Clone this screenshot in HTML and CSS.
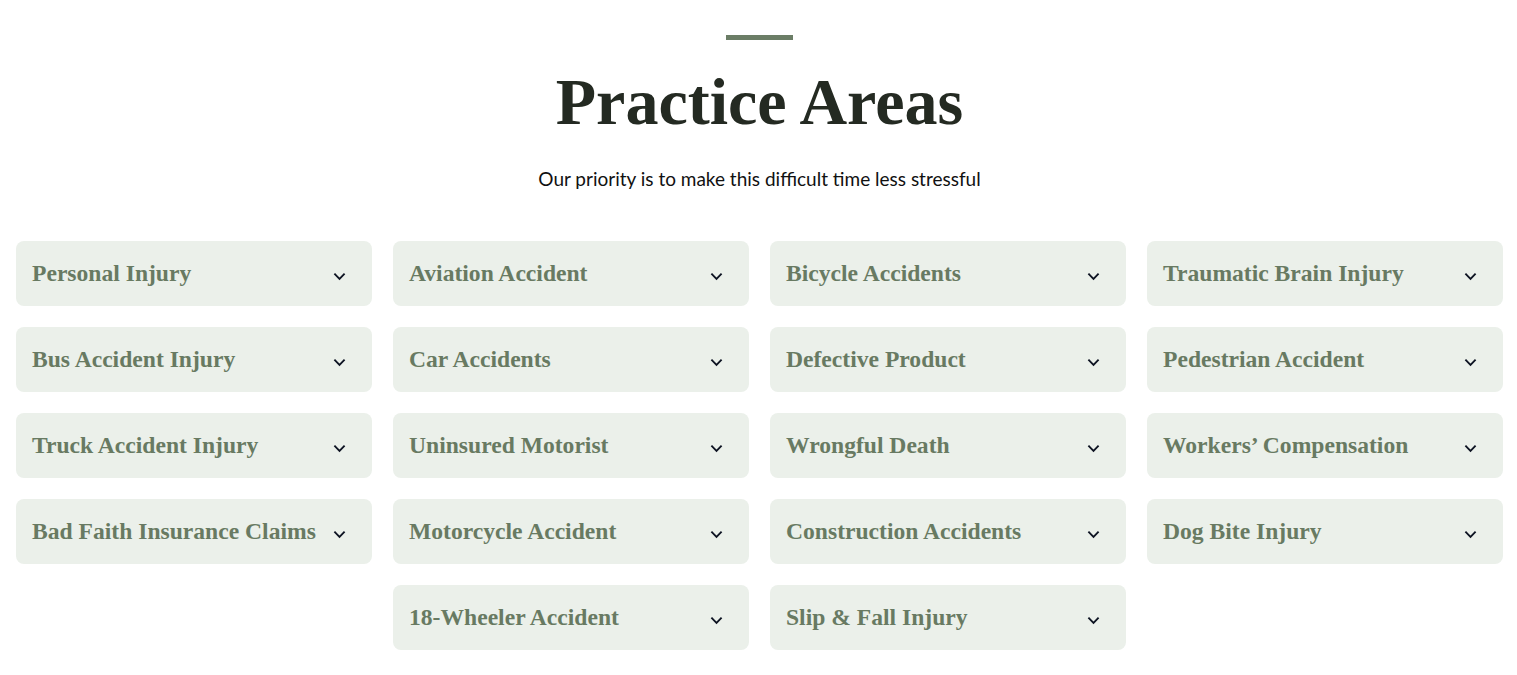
FILE: index.html
```html
<!DOCTYPE html>
<html lang="en">
<head>
    <meta charset="UTF-8">
    <meta name="viewport" content="width=device-width, initial-scale=1.0">
    <title>Practice Areas</title>
    <link rel="stylesheet" href="styles.css">
</head>
<body>
    <section class="practice">
        <div class="divider"></div>
        <h2>Practice Areas</h2>
        <p class="subtitle">Our priority is to make this difficult time less stressful</p>

        <ul class="area-list">
            <li class="area-item"><span>Personal Injury</span><svg class="chev" viewBox="0 0 14 9"><path d="M1.5 1.5 7 7l5.5-5.5"/></svg></li>
            <li class="area-item"><span>Aviation Accident</span><svg class="chev" viewBox="0 0 14 9"><path d="M1.5 1.5 7 7l5.5-5.5"/></svg></li>
            <li class="area-item"><span>Bicycle Accidents</span><svg class="chev" viewBox="0 0 14 9"><path d="M1.5 1.5 7 7l5.5-5.5"/></svg></li>
            <li class="area-item"><span>Traumatic Brain Injury</span><svg class="chev" viewBox="0 0 14 9"><path d="M1.5 1.5 7 7l5.5-5.5"/></svg></li>
            <li class="area-item"><span>Bus Accident Injury</span><svg class="chev" viewBox="0 0 14 9"><path d="M1.5 1.5 7 7l5.5-5.5"/></svg></li>
            <li class="area-item"><span>Car Accidents</span><svg class="chev" viewBox="0 0 14 9"><path d="M1.5 1.5 7 7l5.5-5.5"/></svg></li>
            <li class="area-item"><span>Defective Product</span><svg class="chev" viewBox="0 0 14 9"><path d="M1.5 1.5 7 7l5.5-5.5"/></svg></li>
            <li class="area-item"><span>Pedestrian Accident</span><svg class="chev" viewBox="0 0 14 9"><path d="M1.5 1.5 7 7l5.5-5.5"/></svg></li>
            <li class="area-item"><span>Truck Accident Injury</span><svg class="chev" viewBox="0 0 14 9"><path d="M1.5 1.5 7 7l5.5-5.5"/></svg></li>
            <li class="area-item"><span>Uninsured Motorist</span><svg class="chev" viewBox="0 0 14 9"><path d="M1.5 1.5 7 7l5.5-5.5"/></svg></li>
            <li class="area-item"><span>Wrongful Death</span><svg class="chev" viewBox="0 0 14 9"><path d="M1.5 1.5 7 7l5.5-5.5"/></svg></li>
            <li class="area-item"><span>Workers’ Compensation</span><svg class="chev" viewBox="0 0 14 9"><path d="M1.5 1.5 7 7l5.5-5.5"/></svg></li>
            <li class="area-item"><span>Bad Faith Insurance Claims</span><svg class="chev" viewBox="0 0 14 9"><path d="M1.5 1.5 7 7l5.5-5.5"/></svg></li>
            <li class="area-item"><span>Motorcycle Accident</span><svg class="chev" viewBox="0 0 14 9"><path d="M1.5 1.5 7 7l5.5-5.5"/></svg></li>
            <li class="area-item"><span>Construction Accidents</span><svg class="chev" viewBox="0 0 14 9"><path d="M1.5 1.5 7 7l5.5-5.5"/></svg></li>
            <li class="area-item"><span>Dog Bite Injury</span><svg class="chev" viewBox="0 0 14 9"><path d="M1.5 1.5 7 7l5.5-5.5"/></svg></li>
            <li class="area-item"><span>18-Wheeler Accident</span><svg class="chev" viewBox="0 0 14 9"><path d="M1.5 1.5 7 7l5.5-5.5"/></svg></li>
            <li class="area-item"><span>Slip &amp; Fall Injury</span><svg class="chev" viewBox="0 0 14 9"><path d="M1.5 1.5 7 7l5.5-5.5"/></svg></li>
        </ul>
    </section>
</body>
</html>
```

FILE: styles.css
```css
body {
    font-family: Lato, "Liberation Sans", Arial, sans-serif;
    background: #ffffff;
    margin: 0;
    padding: 0;
    overflow: hidden;
}
.practice {
    padding: 35px 14px 0 16px;
    display: flex;
    flex-direction: column;
    align-items: center;
}
.divider {
    width: 67px;
    height: 5px;
    background: #6b7d66;
}
h2 {
    font-family: "Liberation Serif", "Times New Roman", serif;
    font-size: 66px;
    font-weight: 700;
    color: #242a22;
    margin: 24px 0 0;
    line-height: 76px;
}
.subtitle {
    font-size: 19px;
    color: #111;
    margin: 27px 0 0;
    line-height: 24px;
}
.area-list {
    list-style-type: none;
    padding: 0;
    margin: 50px 0 0;
    width: 100%;
    display: flex;
    flex-wrap: wrap;
    justify-content: center;
    gap: 21px 21px;
}
.area-item {
    box-sizing: border-box;
    width: 356px;
    height: 65px;
    display: flex;
    align-items: center;
    justify-content: space-between;
    padding: 0 26px 0 16px;
    background: #ebf0ea;
    border-radius: 8px;
}
.area-item span {
    font-family: "Liberation Serif", "Times New Roman", serif;
    font-size: 23.6px;
    font-weight: 700;
    color: #687a62;
}
.chev {
    width: 13px;
    height: 9px;
    margin-top: 6px;
    fill: none;
    stroke: #0d1322;
    stroke-width: 2;
}
```
